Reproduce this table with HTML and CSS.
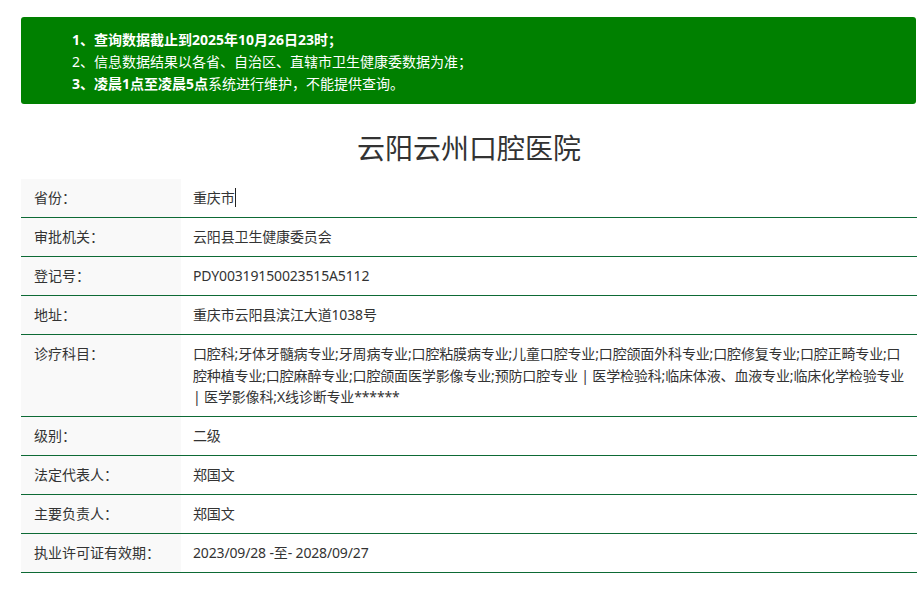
FILE: index.html
```html
<!DOCTYPE html>
<html lang="zh-CN">
<head>
<meta charset="utf-8">
<title>云阳云州口腔医院</title>
<link rel="stylesheet" href="styles.css">
</head>
<body>
<div class="page">
  <div class="notice">
    <p class="notice-line"><b>1、查询数据截止到2025年10月26日23时；</b></p>
    <p class="notice-line">2、信息数据结果以各省、自治区、直辖市卫生健康委数据为准；</p>
    <p class="notice-line"><b>3、凌晨1点至凌晨5点</b>系统进行维护，不能提供查询。</p>
  </div>
  <h1 class="title">云阳云州口腔医院</h1>
  <div class="info">
    <div class="row"><div class="label">省份：</div><div class="value">重庆市<span class="caret"></span></div></div>
    <div class="row"><div class="label">审批机关：</div><div class="value">云阳县卫生健康委员会</div></div>
    <div class="row"><div class="label">登记号：</div><div class="value">PDY00319150023515A5112</div></div>
    <div class="row"><div class="label">地址：</div><div class="value">重庆市云阳县滨江大道1038号</div></div>
    <div class="row"><div class="label">诊疗科目：</div><div class="value">口腔科;牙体牙髓病专业;牙周病专业;口腔粘膜病专业;儿童口腔专业;口腔颌面外科专业;口腔修复专业;口腔正畸专业;口腔种植专业;口腔麻醉专业;口腔颌面医学影像专业;预防口腔专业 | 医学检验科;临床体液、血液专业;临床化学检验专业 | 医学影像科;X线诊断专业******</div></div>
    <div class="row"><div class="label">级别：</div><div class="value">二级</div></div>
    <div class="row"><div class="label">法定代表人：</div><div class="value">郑国文</div></div>
    <div class="row"><div class="label">主要负责人：</div><div class="value">郑国文</div></div>
    <div class="row"><div class="label">执业许可证有效期：</div><div class="value">2023/09/28 -至- 2028/09/27</div></div>
  </div>
</div>
</body>
</html>
```
FILE: styles.css
```css
html, body {
  margin: 0;
  padding: 0;
  background: #ffffff;
}
body {
  font-family: "Noto Sans", "Noto Sans CJK SC", sans-serif;
  color: #333333;
  font-size: 14px;
}
.page {
  margin: 17px 0 0 21px;
}
.notice {
  background: #008000;
  border-radius: 3px;
  margin-right: 1px;
  padding: 12px 0 9px 51px;
  color: #ffffff;
}
.notice-line {
  margin: 0;
  line-height: 22px;
  font-size: 14px;
}
.notice-line b {
  font-weight: 700;
}
.title {
  margin: 22px 0 9px;
  text-align: center;
  font-size: 28px;
  line-height: 44px;
  font-weight: 400;
  color: #333333;
}
.info {
  display: flex;
  flex-direction: column;
}
.row {
  display: flex;
  border-bottom: 1px solid #0d6a35;
}
.label {
  flex: 0 0 160px;
  box-sizing: border-box;
  padding: 8px 13px 8.5px;
  background: #f9f9f9;
  line-height: 21.5px;
}
.value {
  flex: 1 1 auto;
  min-width: 0;
  padding: 8px 4px 8.5px 12px;
  line-height: 21.5px;
  letter-spacing: -0.15px;
}
.caret {
  display: inline-block;
  width: 1px;
  height: 19px;
  background: #222222;
  vertical-align: -4px;
}
```
